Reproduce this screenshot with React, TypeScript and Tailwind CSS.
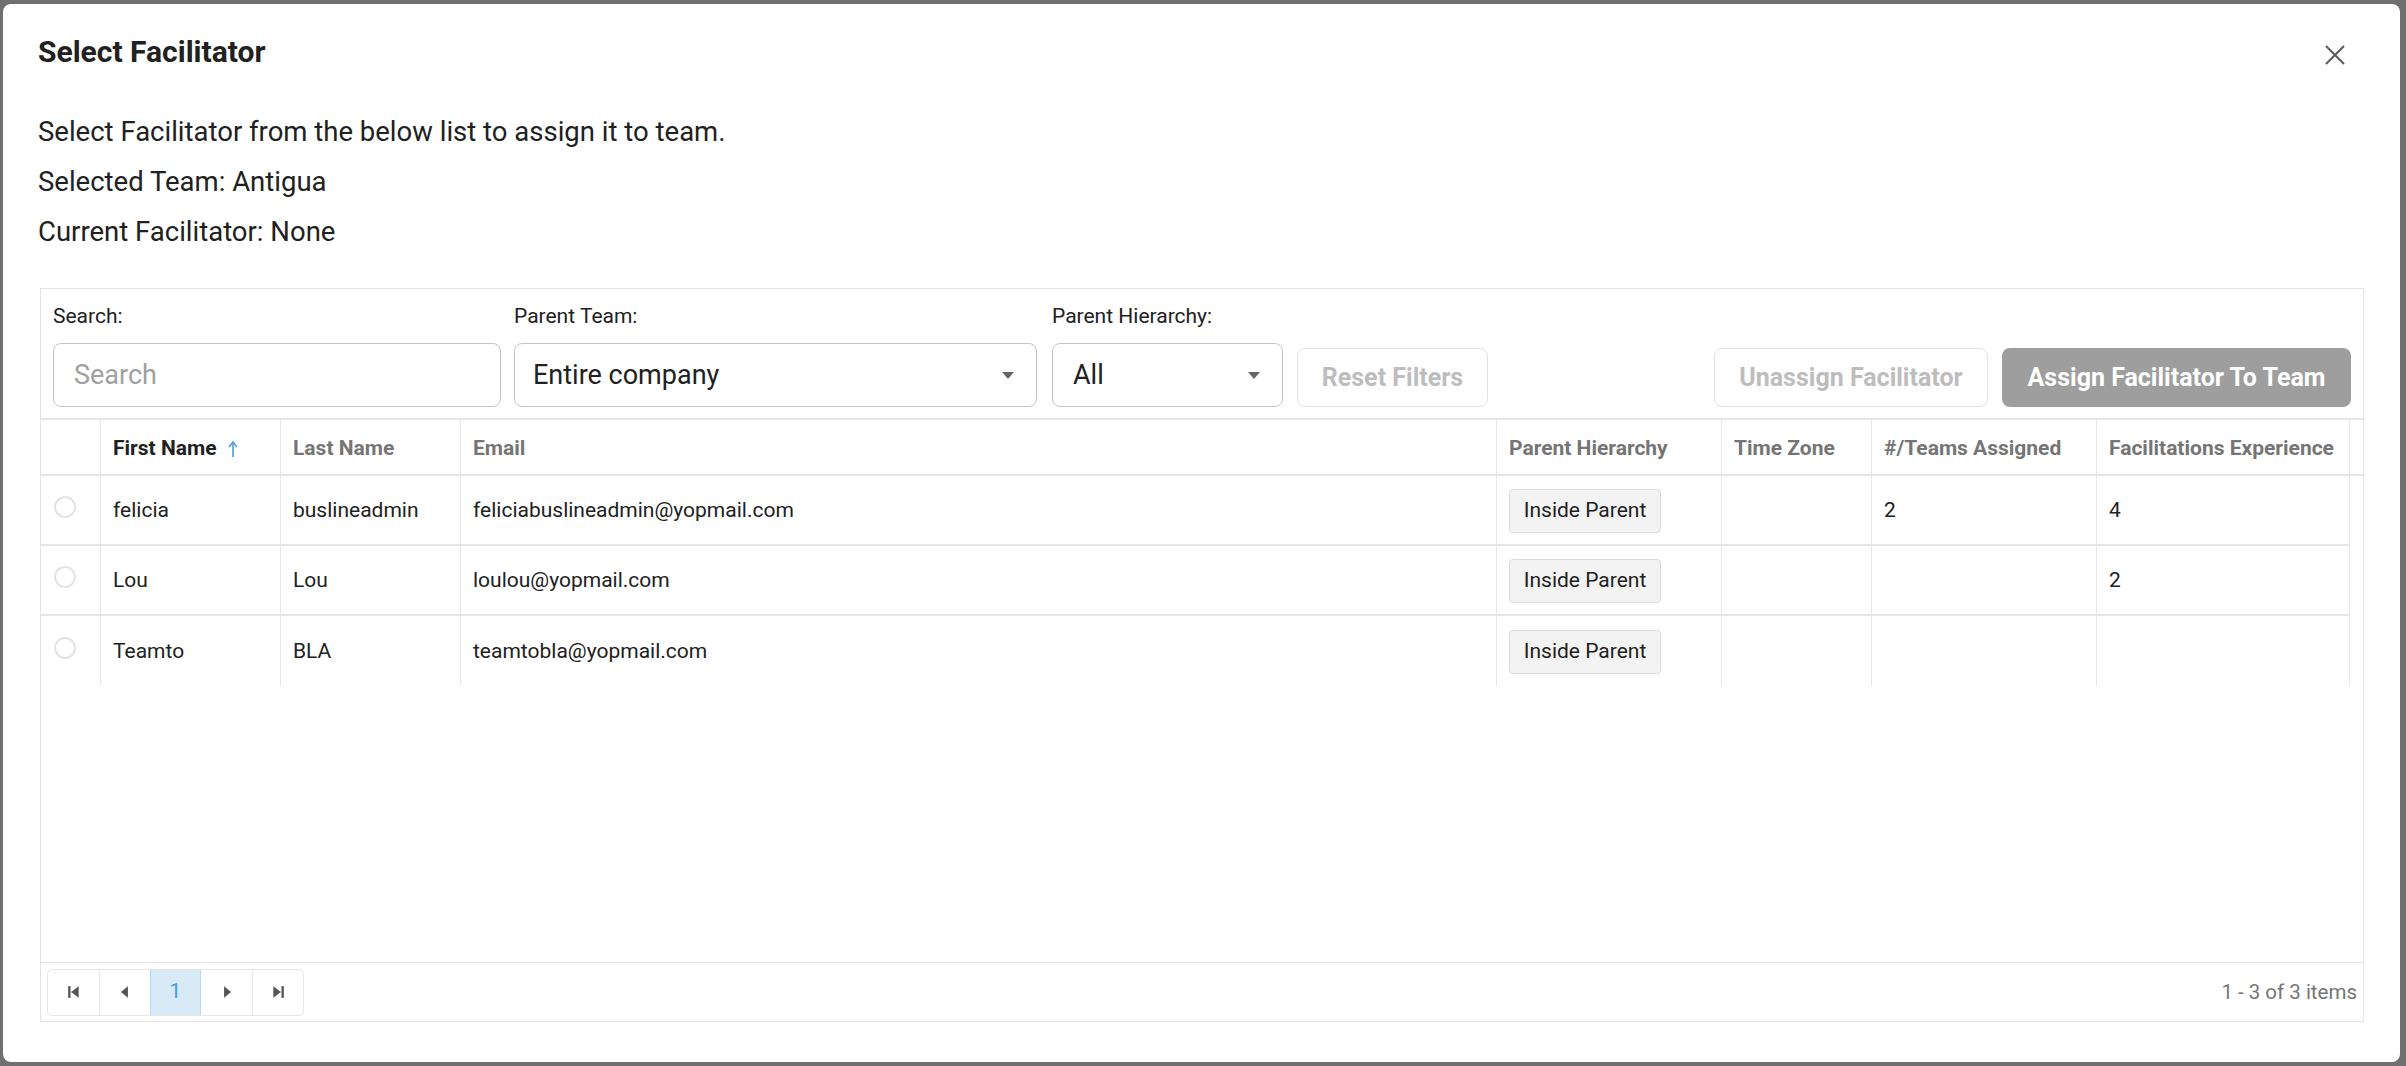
import { FC, ReactNode } from "react";

type Facilitator = {
  firstName: string;
  lastName: string;
  email: string;
  teamsAssigned?: number;
  experience?: number;
};

const facilitators: Facilitator[] = [
  { firstName: "felicia", lastName: "buslineadmin", email: "feliciabuslineadmin@yopmail.com", teamsAssigned: 2, experience: 4 },
  { firstName: "Lou", lastName: "Lou", email: "loulou@yopmail.com", experience: 2 },
  { firstName: "Teamto", lastName: "BLA", email: "teamtobla@yopmail.com" },
];

const gridCols = "grid grid-cols-[59px_180px_180px_1036px_225px_150px_225px_254px]";

const Caret = () => (
  <svg width="12" height="7" viewBox="0 0 12 7" className="shrink-0">
    <path d="M0 0h12L6 7z" fill="#666" />
  </svg>
);

const SortUp = () => (
  <svg width="10" height="16" viewBox="0 0 10 16" className="ml-[12px]">
    <path d="M5 1.5V16" stroke="#4a9fd8" strokeWidth="1.6" />
    <path d="M1 6L5 1l4 5" stroke="#4a9fd8" strokeWidth="1.6" fill="none" />
  </svg>
);

const PagerIcon: FC<{ kind: "first" | "prev" | "next" | "last" }> = ({ kind }) => (
  <svg width="14" height="14" viewBox="0 0 12 12">
    {kind === "first" && (
      <>
        <rect x="1" y="1" width="2" height="10" fill="#555" />
        <path d="M10 1v10L3.5 6z" fill="#555" />
      </>
    )}
    {kind === "prev" && <path d="M8.5 1v10L2.5 6z" fill="#555" />}
    {kind === "next" && <path d="M3.5 1v10l6-5z" fill="#555" />}
    {kind === "last" && (
      <>
        <path d="M2 1v10l6.5-5z" fill="#555" />
        <rect x="9" y="1" width="2" height="10" fill="#555" />
      </>
    )}
  </svg>
);

const HeaderCell: FC<{ children?: ReactNode; active?: boolean; first?: boolean; last?: boolean }> = ({
  children,
  active,
  first,
  last,
}) => (
  <div
    className={`flex items-center whitespace-nowrap px-[12px] pt-[3px] text-[21px] font-bold ${active ? "text-[#212121]" : "text-[#757575]"} ${
      first ? "" : "border-l border-[#e6e6e6]"
    } ${last ? "border-r border-[#e6e6e6]" : ""}`}
  >
    {children}
  </div>
);

const Cell: FC<{ children?: ReactNode; last?: boolean }> = ({ children, last }) => (
  <div
    className={`flex items-center border-l border-[#e6e6e6] px-[12px] pt-[2px] text-[21px] text-[#212121] ${
      last ? "border-r" : ""
    }`}
  >
    {children}
  </div>
);

export default function App() {
  return (
    <div className="flex h-[1066px] w-[2406px] overflow-hidden bg-[#6f6f6f] pl-[3px] pt-[4px] font-['Roboto',sans-serif]">
      <div className="flex h-[1058px] w-[2397px] flex-col rounded-[8px] bg-white">
        {/* header */}
        <div className="flex items-center justify-between pl-[35px] pr-[55px] pt-[30px]">
          <h2 className="text-[30px] font-bold leading-[36px] text-[#212121]">Select Facilitator</h2>
          <svg width="20" height="20" viewBox="0 0 20 20" className="mt-[6px]">
            <path d="M1 1l18 18M19 1L1 19" stroke="#5a5a5a" strokeWidth="2" />
          </svg>
        </div>

        <div className="mt-[37px] pl-[35px] text-[27.5px] leading-[50px] text-[#212121]">
          <p>Select Facilitator from the below list to assign it to team.</p>
          <p>Selected Team: Antigua</p>
          <p>Current Facilitator: None</p>
        </div>

        {/* grid panel */}
        <div className="ml-[37px] mt-[31px] flex h-[734px] w-[2324px] flex-col border border-[#e3e3e3]">
          <div className="flex items-end border-b-2 border-[#e6e6e6] pb-[11px] pl-[12px] pr-[12px] pt-[15px]">
            <label className="flex w-[448px] flex-col">
              <span className="text-[21px] leading-[24px] text-[#212121]">Search:</span>
              <input
                placeholder="Search"
                className="mt-[15px] h-[64px] rounded-[8px] border border-[#c4c4c4] px-[20px] text-[27px] text-[#212121] outline-none placeholder:text-[#a0a0a0]"
              />
            </label>
            <div className="ml-[13px] flex w-[523px] flex-col">
              <span className="text-[21px] leading-[24px] text-[#212121]">Parent Team:</span>
              <div className="mt-[15px] flex h-[64px] items-center justify-between rounded-[8px] border border-[#c4c4c4] pl-[18px] pr-[22px] text-[27px] text-[#212121]">
                <span>Entire company</span>
                <Caret />
              </div>
            </div>
            <div className="ml-[15px] flex w-[231px] flex-col">
              <span className="text-[21px] leading-[24px] text-[#212121]">Parent Hierarchy:</span>
              <div className="mt-[15px] flex h-[64px] items-center justify-between rounded-[8px] border border-[#c4c4c4] pl-[20px] pr-[22px] text-[27px] text-[#212121]">
                <span>All</span>
                <Caret />
              </div>
            </div>
            <button className="ml-[14px] h-[59px] w-[191px] rounded-[8px] border border-[#e3e3e3] text-[25px] font-bold text-[#bdbdbd]">
              Reset Filters
            </button>
            <div className="flex-1" />
            <button className="h-[59px] w-[274px] rounded-[8px] border border-[#e3e3e3] text-[25px] font-bold text-[#bdbdbd]">
              Unassign Facilitator
            </button>
            <button className="ml-[14px] h-[59px] w-[349px] rounded-[8px] bg-[#9e9e9e] text-[25px] font-bold text-white">
              Assign Facilitator To Team
            </button>
          </div>

          {/* table header */}
          <div className="border-b-2 border-[#e6e6e6]">
            <div className={`${gridCols} h-[54px]`}>
              <HeaderCell first />
              <HeaderCell active>
                First Name
                <SortUp />
              </HeaderCell>
              <HeaderCell>Last Name</HeaderCell>
              <HeaderCell>Email</HeaderCell>
              <HeaderCell>Parent Hierarchy</HeaderCell>
              <HeaderCell>Time Zone</HeaderCell>
              <HeaderCell>#/Teams Assigned</HeaderCell>
              <HeaderCell last>Facilitations Experience</HeaderCell>
            </div>
          </div>

          {/* rows */}
          <div className="flex-1">
            {facilitators.map((f, i) => (
              <div
                key={f.email}
                className={`${gridCols} h-[70px] w-[2309px] ${i < facilitators.length - 1 ? "border-b-2 border-[#e6e6e6]" : ""}`}
              >
                <div className="flex items-center pl-[13px]">
                  <span className="mb-[6px] h-[22px] w-[22px] rounded-full border-2 border-[#e3e3e3]" />
                </div>
                <Cell>{f.firstName}</Cell>
                <Cell>{f.lastName}</Cell>
                <Cell>{f.email}</Cell>
                <Cell>
                  <span className="flex h-[44px] w-[152px] items-center justify-center rounded-[4px] border border-[#dcdcdc] bg-[#f3f3f3] text-[21px]">
                    Inside Parent
                  </span>
                </Cell>
                <Cell />
                <Cell>{f.teamsAssigned}</Cell>
                <Cell last>{f.experience}</Cell>
              </div>
            ))}
          </div>

          {/* pager */}
          <div className="flex h-[59px] items-center justify-between border-t border-[#e3e3e3] pl-[6px] pr-[6px]">
            <div className="flex h-[47px] overflow-hidden rounded-[5px] border border-[#e6e6e6]">
              <span className="flex w-[51px] items-center justify-center">
                <PagerIcon kind="first" />
              </span>
              <span className="flex w-[51px] items-center justify-center border-l border-[#e6e6e6]">
                <PagerIcon kind="prev" />
              </span>
              <span className="flex w-[51px] items-center justify-center border-x border-[#b9d6ee] bg-[#d9eaf7] text-[21px] text-[#4a9fd8]">
                1
              </span>
              <span className="flex w-[51px] items-center justify-center">
                <PagerIcon kind="next" />
              </span>
              <span className="flex w-[51px] items-center justify-center border-l border-[#e6e6e6]">
                <PagerIcon kind="last" />
              </span>
            </div>
            <span className="text-[20.5px] text-[#757575]">1 - 3 of 3 items</span>
          </div>
        </div>
      </div>
    </div>
  );
}
